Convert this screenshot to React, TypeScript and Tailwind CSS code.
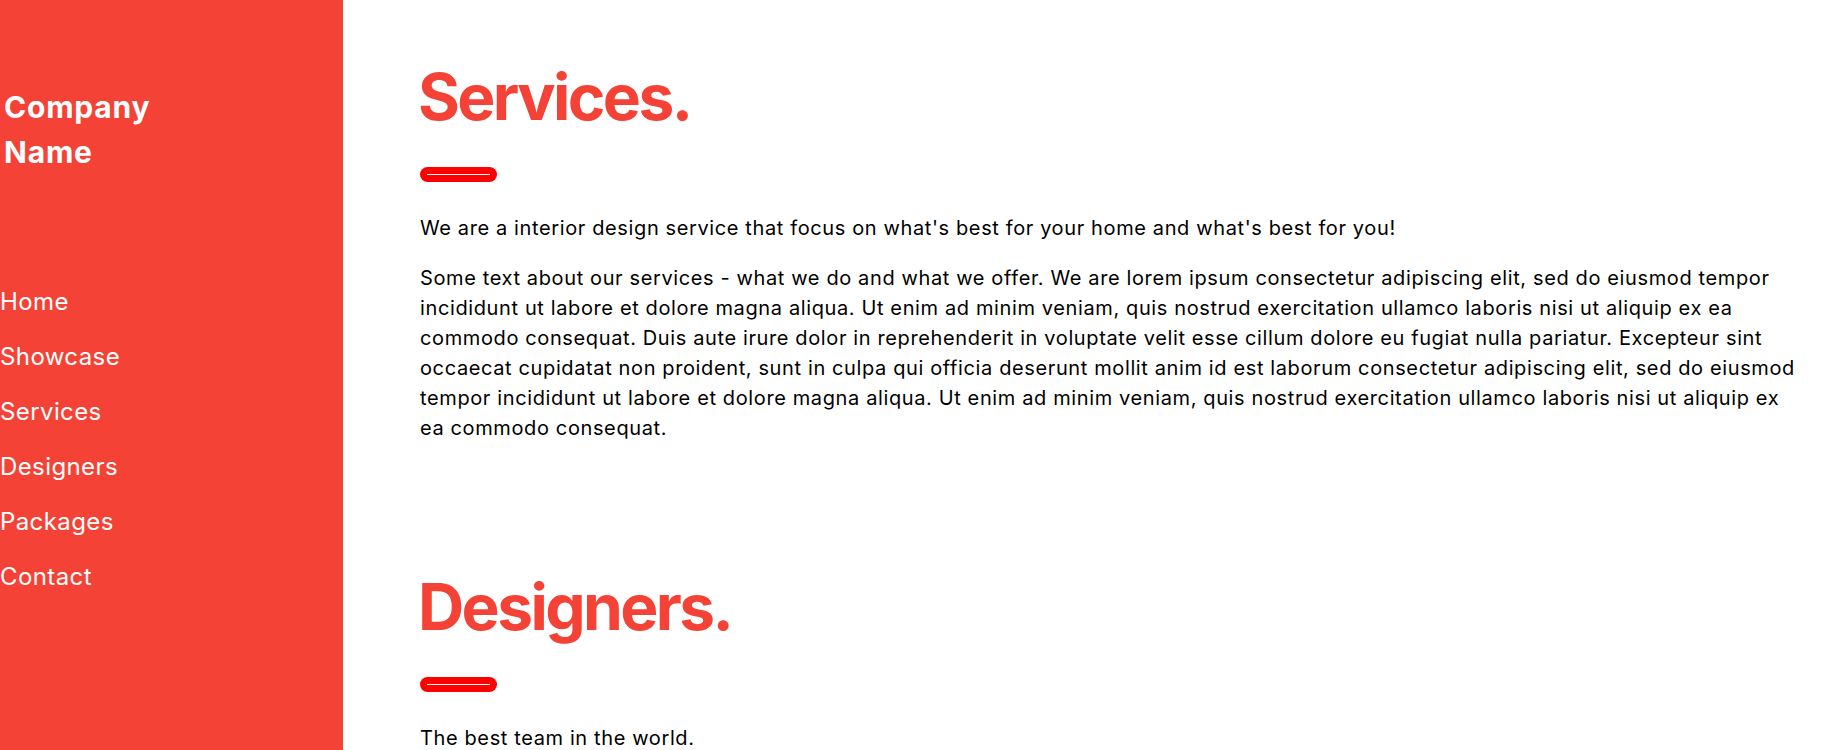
const navLinks = ["Home", "Showcase", "Services", "Designers", "Packages", "Contact"];

const servicesText =
  "Some text about our services - what we do and what we offer. We are lorem ipsum consectetur adipiscing elit, sed do eiusmod tempor incididunt ut labore et dolore magna aliqua. Ut enim ad minim veniam, quis nostrud exercitation ullamco laboris nisi ut aliquip ex ea commodo consequat. Duis aute irure dolor in reprehenderit in voluptate velit esse cillum dolore eu fugiat nulla pariatur. Excepteur sint occaecat cupidatat non proident, sunt in culpa qui officia deserunt mollit anim id est laborum consectetur adipiscing elit, sed do eiusmod tempor incididunt ut labore et dolore magna aliqua. Ut enim ad minim veniam, quis nostrud exercitation ullamco laboris nisi ut aliquip ex ea commodo consequat.";

const RedRule = () => (
  <div className="w-[77px] h-[15px] rounded-full bg-[#ff0000] flex items-center justify-center">
    <div className="w-[63px] h-px bg-white" />
  </div>
);

const Sidebar = () => (
  <aside className="w-[343px] shrink-0 min-h-screen bg-[#f44336] text-white">
    <h3 className="mt-[85px] pl-[4px] text-[30px] leading-[45px] font-bold tracking-[0.8px]">
      Company
      <br />
      Name
    </h3>
    <nav className="mt-[99px] flex flex-col">
      {navLinks.map((link) => (
        <a
          key={link}
          href={`#${link.toLowerCase()}`}
          className="h-[55px] flex items-center text-[24px] tracking-[0.4px]"
        >
          {link}
        </a>
      ))}
    </nav>
  </aside>
);

const Section = ({ title, children }: { title: string; children: React.ReactNode }) => (
  <section>
    <h1 className="text-[64px] leading-none font-bold text-[#f44336] tracking-[-2.6px] -ml-[2px]">
      {title}
    </h1>
    <div className="mt-[38px]">
      <RedRule />
    </div>
    <div className="mt-[31px] flex flex-col gap-[20px]">{children}</div>
  </section>
);

export default function App() {
  return (
    <div
      className="flex h-screen overflow-hidden bg-white text-black"
      style={{ fontFamily: "Inter, 'Liberation Sans', sans-serif" }}
    >
      <Sidebar />
      <main className="flex-1 pl-[77px] pr-[34px] pt-[65px]">
        <div className="max-w-[1385px] text-[20px] leading-[30px] tracking-[0.62px]">
          <Section title="Services.">
            <p>We are a interior design service that focus on what's best for your home and what's best for you!</p>
            <p>{servicesText}</p>
          </Section>
          <div className="mt-[132px]">
            <Section title="Designers.">
              <p>The best team in the world.</p>
            </Section>
          </div>
        </div>
      </main>
    </div>
  );
}
